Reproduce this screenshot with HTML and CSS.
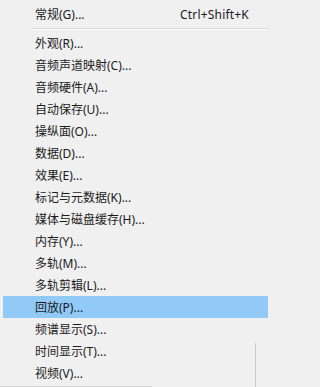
FILE: index.html
```html
<!DOCTYPE html>
<html lang="zh-CN">
<head>
<meta charset="utf-8">
<link rel="stylesheet" href="styles.css">
</head>
<body>
<div class="menu">
  <div class="item"><span class="label">常规(G)...</span><span class="key">Ctrl+Shift+K</span></div>
  <div class="sep"></div>
  <div class="item"><span class="label">外观(R)...</span></div>
  <div class="item"><span class="label">音频声道映射(C)...</span></div>
  <div class="item"><span class="label">音频硬件(A)...</span></div>
  <div class="item"><span class="label">自动保存(U)...</span></div>
  <div class="item"><span class="label">操纵面(O)...</span></div>
  <div class="item"><span class="label">数据(D)...</span></div>
  <div class="item"><span class="label">效果(E)...</span></div>
  <div class="item"><span class="label">标记与元数据(K)...</span></div>
  <div class="item"><span class="label">媒体与磁盘缓存(H)...</span></div>
  <div class="item"><span class="label">内存(Y)...</span></div>
  <div class="item"><span class="label">多轨(M)...</span></div>
  <div class="item"><span class="label">多轨剪辑(L)...</span></div>
  <div class="item active"><span class="label">回放(P)...</span></div>
  <div class="item"><span class="label">频谱显示(S)...</span></div>
  <div class="item"><span class="label">时间显示(T)...</span></div>
  <div class="item"><span class="label">视频(V)...</span></div>
  <div class="edge-v"></div>
  <div class="edge-h"></div>
</div>
</body>
</html>
```
FILE: styles.css
```css
html, body {
  margin: 0;
  padding: 0;
  background: #f0f0f0;
}
body {
  width: 271px;
  height: 387px;
  overflow: hidden;
  font-family: "Noto Sans", "Noto Sans CJK SC", sans-serif;
  font-size: 12px;
  color: #1b1b1b;
}
.menu {
  position: relative;
  height: 387px;
  padding-top: 3px;
  box-sizing: border-box;
}
.item {
  display: flex;
  align-items: center;
  justify-content: space-between;
  height: 22px;
  margin: 0 3px;
  padding: 0 19px 0 32px;
}
.item.active {
  background: #91c9f7;
}
.key {
  letter-spacing: 0.2px;
}
.sep {
  height: 7px;
  display: flex;
  flex-direction: column;
  justify-content: center;
  margin-left: 32px;
  margin-right: 2px;
}
.sep::before {
  content: "";
  display: block;
  height: 1px;
  background: #d7d7d7;
}
.sep::after {
  content: "";
  display: block;
  height: 1px;
  background: #fbfbfb;
}
.edge-v {
  position: absolute;
  left: 255px;
  top: 343px;
  bottom: 0;
  width: 1px;
  background: #c9c9c9;
}
.edge-h {
  position: absolute;
  left: 0;
  width: 152px;
  bottom: 0;
  height: 1px;
  background: #d2d2d2;
}
```
